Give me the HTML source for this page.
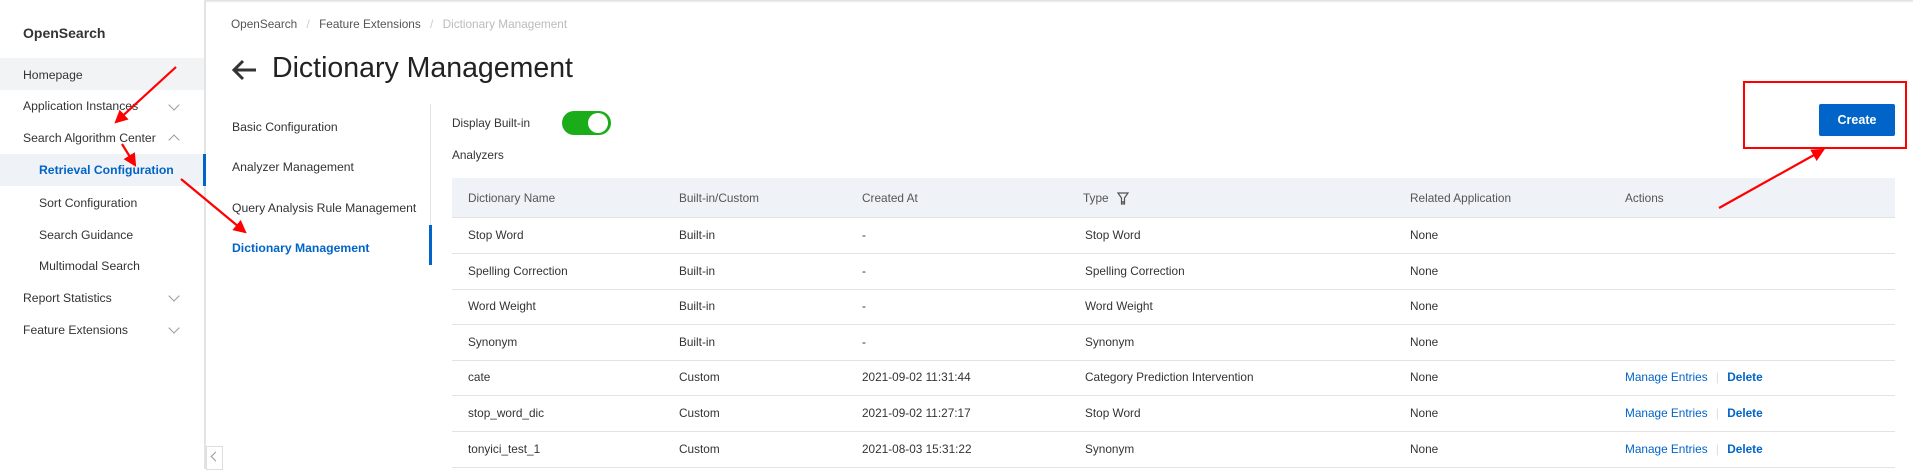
<!DOCTYPE html>
<html><head><meta charset="utf-8"><style>
*{margin:0;padding:0;box-sizing:border-box}
body{width:1913px;height:469px;overflow:hidden;background:#fff;font-family:"Liberation Sans",sans-serif;color:#333;position:relative;font-size:12px}
.a{position:absolute;white-space:nowrap}
.side{position:absolute;left:0;top:0;width:206px;height:469px;border-right:2px solid #e3e3e3;background:#fff}
.si{position:absolute;left:23px;transform:translateY(-50%);font-size:12.2px;color:#333;white-space:nowrap}
.sub{left:39px}
.chev{position:absolute;left:170px;width:8px;height:8px;border-right:1.3px solid #999;border-bottom:1.3px solid #999}
.tab{position:absolute;left:232px;transform:translateY(-50%);font-size:12.2px;color:#333;white-space:nowrap}
.th,.td{position:absolute;transform:translateY(-50%);font-size:11.8px;color:#333;white-space:nowrap}
.th{color:#555}
.row{position:absolute;left:452px;width:1443px;height:1px;background:#e3e3e3}
.lnk{color:#0064c8}
</style></head><body>
<div style="position:absolute;left:0;top:0;width:1913px;height:3px;background:linear-gradient(#ddd,#fff)"></div>
<div class="side">
<div class="si" style="top:33px;font-size:14px;font-weight:bold;color:#333">OpenSearch</div>
<div style="position:absolute;left:0;top:58px;width:204px;height:32px;background:#f2f3f5"></div>
<div class="si" style="top:75px">Homepage</div>
<div class="si" style="top:106px">Application Instances</div><div class="chev" style="top:101px;transform:rotate(45deg)"></div>
<div class="si" style="top:138px">Search Algorithm Center</div><div class="chev" style="top:136px;transform:rotate(-135deg)"></div>
<div style="position:absolute;left:0;top:154px;width:206px;height:32px;background:#eff2f6;border-right:3px solid #0064c8"></div>
<div class="si sub" style="top:170px;color:#0064c8;font-weight:bold">Retrieval Configuration</div>
<div class="si sub" style="top:203px">Sort Configuration</div>
<div class="si sub" style="top:235px">Search Guidance</div>
<div class="si sub" style="top:266px">Multimodal Search</div>
<div class="si" style="top:298px">Report Statistics</div><div class="chev" style="top:292px;transform:rotate(45deg)"></div>
<div class="si" style="top:330px">Feature Extensions</div><div class="chev" style="top:324px;transform:rotate(45deg)"></div>
</div>
<div style="position:absolute;left:206px;top:446px;width:17px;height:24px;border:1px solid #ddd;background:#fff"></div>
<div class="a" style="left:212px;top:453px;width:7px;height:7px;border-left:1px solid #999;border-bottom:1px solid #999;transform:rotate(45deg)"></div>

<div class="a" style="left:231px;top:17px;font-size:11.8px;color:#555">OpenSearch <span style="color:#ccc;margin:0 6px">/</span> Feature Extensions <span style="color:#ccc;margin:0 6px">/</span> <span style="color:#bbb">Dictionary Management</span></div>
<svg class="a" style="left:231px;top:58px" width="27" height="24" viewBox="0 0 27 24"><path d="M25 12H3M12 3L3 12l9 9" fill="none" stroke="#333" stroke-width="3"/></svg>
<div class="a" style="left:272px;top:52px;font-size:28.5px;color:#222">Dictionary Management</div>

<div class="tab" style="top:127px">Basic Configuration</div>
<div class="tab" style="top:167px">Analyzer Management</div>
<div class="tab" style="top:208px">Query Analysis Rule Management</div>
<div class="tab" style="top:248px;color:#0064c8;font-weight:bold">Dictionary Management</div>
<div class="a" style="left:430px;top:104px;width:1px;height:161px;background:#e3e3e3"></div>
<div class="a" style="left:429px;top:225px;width:3px;height:40px;background:#0064c8"></div>

<div class="td" style="left:452px;top:123px">Display Built-in</div>
<div class="a" style="left:562px;top:111px;width:49px;height:24px;border-radius:12px;background:#1aad19"></div>
<div class="a" style="left:588px;top:113px;width:20px;height:20px;border-radius:50%;background:#fff"></div>
<div class="td" style="left:452px;top:155px">Analyzers</div>

<div class="a" style="left:452px;top:178px;width:1443px;height:39px;background:#eff2f6"></div>
<div class="row" style="top:217px"></div>
<div class="th" style="left:468px;top:198px">Dictionary Name</div>
<div class="th" style="left:679px;top:198px">Built-in/Custom</div>
<div class="th" style="left:862px;top:198px">Created At</div>
<div class="th" style="left:1083px;top:198px">Type</div>
<svg class="a" style="left:1117px;top:192px" width="12" height="13" viewBox="0 0 12 13"><path d="M1 1h10L7.5 6v6h-3V6z" fill="none" stroke="#555" stroke-width="1.2"/><rect x="5" y="9" width="2" height="3.5" fill="#777"/></svg>
<div class="th" style="left:1410px;top:198px">Related Application</div>
<div class="th" style="left:1625px;top:198px">Actions</div>

<div class="td" style="left:468px;top:235px">Stop Word</div><div class="td" style="left:679px;top:235px">Built-in</div><div class="td" style="left:862px;top:235px">-</div><div class="td" style="left:1085px;top:235px">Stop Word</div><div class="td" style="left:1410px;top:235px">None</div>
<div class="row" style="top:253px"></div>
<div class="td" style="left:468px;top:271px">Spelling Correction</div><div class="td" style="left:679px;top:271px">Built-in</div><div class="td" style="left:862px;top:271px">-</div><div class="td" style="left:1085px;top:271px">Spelling Correction</div><div class="td" style="left:1410px;top:271px">None</div>
<div class="row" style="top:289px"></div>
<div class="td" style="left:468px;top:306px">Word Weight</div><div class="td" style="left:679px;top:306px">Built-in</div><div class="td" style="left:862px;top:306px">-</div><div class="td" style="left:1085px;top:306px">Word Weight</div><div class="td" style="left:1410px;top:306px">None</div>
<div class="row" style="top:324px"></div>
<div class="td" style="left:468px;top:342px">Synonym</div><div class="td" style="left:679px;top:342px">Built-in</div><div class="td" style="left:862px;top:342px">-</div><div class="td" style="left:1085px;top:342px">Synonym</div><div class="td" style="left:1410px;top:342px">None</div>
<div class="row" style="top:360px"></div>
<div class="td" style="left:468px;top:377px">cate</div><div class="td" style="left:679px;top:377px">Custom</div><div class="td" style="left:862px;top:377px">2021-09-02 11:31:44</div><div class="td" style="left:1085px;top:377px">Category Prediction Intervention</div><div class="td" style="left:1410px;top:377px">None</div><div class="td lnk" style="left:1625px;top:377px">Manage Entries <span style="color:#ddd;margin:0 5px">|</span> <b>Delete</b></div>
<div class="row" style="top:395px"></div>
<div class="td" style="left:468px;top:413px">stop_word_dic</div><div class="td" style="left:679px;top:413px">Custom</div><div class="td" style="left:862px;top:413px">2021-09-02 11:27:17</div><div class="td" style="left:1085px;top:413px">Stop Word</div><div class="td" style="left:1410px;top:413px">None</div><div class="td lnk" style="left:1625px;top:413px">Manage Entries <span style="color:#ddd;margin:0 5px">|</span> <b>Delete</b></div>
<div class="row" style="top:431px"></div>
<div class="td" style="left:468px;top:449px">tonyici_test_1</div><div class="td" style="left:679px;top:449px">Custom</div><div class="td" style="left:862px;top:449px">2021-08-03 15:31:22</div><div class="td" style="left:1085px;top:449px">Synonym</div><div class="td" style="left:1410px;top:449px">None</div><div class="td lnk" style="left:1625px;top:449px">Manage Entries <span style="color:#ddd;margin:0 5px">|</span> <b>Delete</b></div>
<div class="row" style="top:467px"></div>

<div class="a" style="left:1819px;top:104px;width:76px;height:32px;background:#0064c8;border-radius:2px;color:#fff;font-size:12.5px;font-weight:bold;text-align:center;line-height:32px">Create</div>
<div class="a" style="left:1743px;top:81px;width:164px;height:68px;border:2px solid #f00"></div>

<svg class="a" style="left:0;top:0" width="1913" height="469">
<defs><marker id="h" markerWidth="6" markerHeight="6" refX="5" refY="3" orient="auto" markerUnits="strokeWidth"><path d="M0,0L6,3L0,6z" fill="#f00"/></marker></defs>
<g stroke="#f00" stroke-width="2.2" fill="none" marker-end="url(#h)">
<line x1="176" y1="67" x2="116" y2="122"/>
<line x1="122" y1="144" x2="135" y2="165"/>
<line x1="181" y1="179" x2="245" y2="232"/>
<line x1="1719" y1="208" x2="1823" y2="150"/>
</g></svg>
</body></html>
